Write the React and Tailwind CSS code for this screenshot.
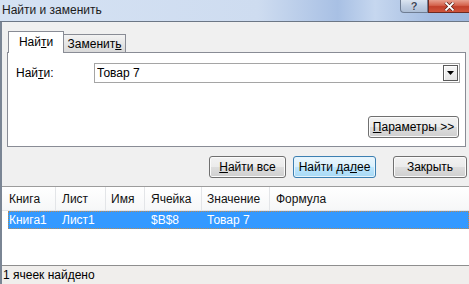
import { useState } from 'react';

const FONT = "font-['Liberation_Sans',Arial,sans-serif]";

const BTN = 'h-[22px] rounded-[3px] border border-[#707070] bg-[linear-gradient(#f2f2f2,#ebebeb_50%,#dddddd_51%,#cfcfcf)] shadow-[inset_0_0_0_1px_#fbfbfb] text-[12px] text-black flex items-center justify-center';
const BTN_FOCUS = 'h-[22px] rounded-[3px] border border-[#3c7fb1] bg-[linear-gradient(#eaf6fd,#d9f0fc_50%,#bee6fd_51%,#a7d9f5)] shadow-[inset_0_0_0_1px_#e6f4fc] text-[12px] text-black flex items-center justify-center';

const COLUMNS = [
  { label: 'Книга', w: 'w-[54px]', pl: 'pl-[7px]' },
  { label: 'Лист', w: 'w-[50px]', pl: 'pl-[6px]' },
  { label: 'Имя', w: 'w-[39px]', pl: 'pl-[5px]' },
  { label: 'Ячейка', w: 'w-[57px]', pl: 'pl-[6px]' },
  { label: 'Значение', w: 'w-[68px]', pl: 'pl-[5px]' },
];

const RESULTS = [{ book: 'Книга1', sheet: 'Лист1', name: '', cell: '$B$8', value: 'Товар 7', formula: '' }];

function TitleBar() {
  return (
    <div className="h-[22px] flex border-b border-[#6c7786] bg-[linear-gradient(90deg,#d5e2f3_0%,#cedcf0_55%,#a8c0e4_72%,#c6d7ef_80%,#a4bce1_92%,#9fb8de_100%)]">
      <span className="pl-[2px] pt-[3px] text-[12px] leading-[15px] text-[#1b1b1b]">Найти и заменить</span>
      <div className="ml-auto flex h-[13px]">
        <div className="w-[28px] h-full flex items-center justify-center border border-t-0 border-[#6f7d93] rounded-bl-[4px] bg-[linear-gradient(#dbe4f0,#c0cee2_50%,#aebfd6)]">
          <span className="text-[11px] leading-[11px] font-bold text-[#3b4657] [text-shadow:0_0_1px_#fff]">?</span>
        </div>
        <div className="w-[41px] h-full flex items-center justify-center border-b border-l border-[#6e2a22] bg-[linear-gradient(#e7a08f,#d4634d_45%,#c2402b_55%,#d0553c)]">
          <svg width="11" height="9" viewBox="0 0 11 9">
            <path d="M1.5 0.5 L9.5 8.5 M9.5 0.5 L1.5 8.5" stroke="#5a2018" strokeWidth="3.2" />
            <path d="M1.5 0.5 L9.5 8.5 M9.5 0.5 L1.5 8.5" stroke="#ffffff" strokeWidth="1.8" />
          </svg>
        </div>
      </div>
    </div>
  );
}

function FindPanel() {
  const [query, setQuery] = useState('Товар 7');
  return (
    <div className="h-[95px] border border-[#898c95] bg-white flex flex-col pt-[10px]">
      <div className="flex items-center pl-[8px]">
        <span className="w-[78px] text-[12px] text-black">Най<u>т</u>и:</span>
        <div className="w-[366px] h-[20px] border border-[#a5a5a5] flex items-center">
          <input
            value={query}
            onChange={(e) => setQuery(e.target.value)}
            className="flex-1 min-w-0 pl-[2px] text-[12px] text-black outline-none bg-transparent"
          />
          <div className="w-[15px] h-[16px] mr-[1px] border border-[#5a5a5a] bg-[linear-gradient(#f7f7f7,#e4e4e4)] shadow-[inset_1px_1px_0_#ffffff] flex items-center justify-center">
            <svg width="7" height="4" viewBox="0 0 7 4"><path d="M0 0 H7 L3.5 4 Z" fill="#000" /></svg>
          </div>
        </div>
      </div>
      <div className="flex justify-end pr-[6px] mt-[33px]">
        <button className={`${BTN} w-[91px]`}><u>П</u>араметры &gt;&gt;</button>
      </div>
    </div>
  );
}

function ResultsList() {
  return (
    <div className="flex-1 flex flex-col bg-white border-t border-[#9c9c9c]">
      <div className="h-[24px] flex border-b border-[#e3e5e8] bg-[linear-gradient(#ffffff,#f6f7f8)] text-[12px] text-[#111]">
        {COLUMNS.map((c) => (
          <div key={c.label} className={`${c.w} ${c.pl} flex items-center border-r border-[#e3e5e8]`}>{c.label}</div>
        ))}
        <div className="flex-1 pl-[6px] flex items-center">Формула</div>
      </div>
      {RESULTS.map((r) => (
        <div key={r.cell} className="h-[18px] flex text-[12px]">
          <div className="w-[6px]" />
          <div className="flex-1 flex items-center bg-[#3399ff] text-white outline-1 outline-dotted outline-[#b98a52] -outline-offset-1">
            <div className="w-[48px] pl-[1px]">{r.book}</div>
            <div className="w-[50px] pl-[6px]">{r.sheet}</div>
            <div className="w-[39px] pl-[5px]">{r.name}</div>
            <div className="w-[57px] pl-[6px]">{r.cell}</div>
            <div className="w-[68px] pl-[5px]">{r.value}</div>
            <div className="flex-1 pl-[6px]">{r.formula}</div>
          </div>
        </div>
      ))}
    </div>
  );
}

export default function App() {
  return (
    <div className={`${FONT} w-[469px] h-[284px] flex flex-col bg-[#f0f0f0] overflow-hidden`}>
      <TitleBar />
      <div className="flex-1 flex flex-col border-l-2 border-[#7a8594]">
        <div className="pl-[5px] pr-[3px]">
          <div className="flex items-end mt-[9px] pl-[1px] -mb-px relative z-10">
            <div className="w-[56px] h-[22px] border border-b-0 border-[#898c95] bg-white text-[12px] text-black flex items-center justify-center pb-[1px]">
              Най<u>т</u>и
            </div>
            <div className="w-[62px] h-[18px] mb-px border border-l-0 border-b-0 border-[#898c95] bg-[linear-gradient(#f3f3f3,#e6e6e6_50%,#d9d9d9)] text-[12px] text-black flex items-center justify-center">
              Заменит<u>ь</u>
            </div>
          </div>
          <FindPanel />
        </div>
        <div className="flex justify-end pr-[2px] mt-[9px]">
          <button className={`${BTN} w-[77px]`}><u>Н</u>айти все</button>
          <button className={`${BTN_FOCUS} w-[83px] ml-[7px]`}>Найти да<u>л</u>ее</button>
          <button className={`${BTN} w-[74px] ml-[17px]`}>Закрыть</button>
        </div>
        <div className="mt-[8px] flex-1 flex flex-col">
          <ResultsList />
          <div className="h-[19px] border-t border-[#8e8e8e] bg-[#f0eeec] flex items-center pl-[1px] text-[12px] text-black">
            1 ячеек найдено
          </div>
        </div>
      </div>
    </div>
  );
}
